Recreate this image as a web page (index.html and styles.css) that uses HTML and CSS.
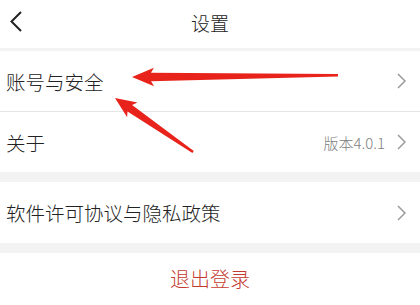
FILE: index.html
```html
<!DOCTYPE html>
<html>
<head>
    <meta charset="UTF-8">
    <meta name="viewport" content="width=device-width, initial-scale=1.0">
    <title>设置</title>
    <link rel="stylesheet" href="styles.css">
</head>
<body>
    <div class="page">
        <div class="header">
            <svg class="back" width="14" height="22" viewBox="0 0 14 22">
                <polyline points="12,1 2.5,10.5 12,20" fill="none" stroke="#222" stroke-width="2"/>
            </svg>
            <div class="title">设置</div>
        </div>

        <div class="group">
            <div class="row">
                <span class="label">账号与安全</span>
                <svg class="chev" width="9" height="16" viewBox="0 0 9 16"><polyline points="1,1 8,8 1,15" fill="none" stroke="#9a9a9a" stroke-width="1.5"/></svg>
            </div>
            <div class="row">
                <span class="label">关于</span>
                <span class="value">版本4.0.1</span>
                <svg class="chev" width="9" height="16" viewBox="0 0 9 16"><polyline points="1,1 8,8 1,15" fill="none" stroke="#9a9a9a" stroke-width="1.5"/></svg>
            </div>
        </div>

        <div class="group">
            <div class="row">
                <span class="label">软件许可协议与隐私政策</span>
                <svg class="chev" width="9" height="16" viewBox="0 0 9 16"><polyline points="1,1 8,8 1,15" fill="none" stroke="#9a9a9a" stroke-width="1.5"/></svg>
            </div>
        </div>

        <div class="logout">退出登录</div>

        <!-- annotation arrows drawn over the screenshot -->
        <svg class="marks" width="420" height="305" viewBox="0 0 420 305">
            <g transform="translate(132,77) rotate(-0.5)" fill="#e8231b">
                <polygon points="0,0 22,-9 19,-4 206,-1.3 206,1.3 19,4.5 22,9.5"/>
            </g>
            <g transform="translate(115,98) rotate(34.7)" fill="#e8231b">
                <polygon points="0,0 21,-9 18,-4 95,-1.2 95,1.2 18,4 21,9"/>
            </g>
        </svg>
    </div>
</body>
</html>
```

FILE: styles.css
```css
* {
    margin: 0;
    padding: 0;
    box-sizing: border-box;
}

body {
    background-color: #f3f3f3;
    font-family: "Noto Sans CJK SC", "Noto Sans", sans-serif;
    font-weight: 300;
    width: 420px;
    height: 305px;
    overflow: hidden;
}

.page {
    position: relative;
    width: 420px;
    height: 305px;
}

.header {
    height: 48px;
    background-color: #ffffff;
    display: flex;
    align-items: center;
    justify-content: center;
    position: relative;
    margin-bottom: 3px;
    padding-bottom: 4px;
}

.back {
    position: absolute;
    left: 9px;
    top: 11px;
}

.title {
    font-size: 19px;
    color: #222222;
}

.group {
    background-color: #ffffff;
    margin-bottom: 10px;
}

.row {
    height: 60px;
    display: flex;
    align-items: center;
    padding: 0 14px 0 6px;
    border-bottom: 1px solid #e6e6e6;
}

.row:last-child {
    border-bottom: none;
}

.group .row:first-child {
    height: 61px;
}

.label {
    flex: 1;
    font-size: 19.5px;
    color: #222222;
}

.value {
    font-size: 15px;
    color: #808080;
    margin-right: 12px;
}

.logout {
    background-color: #ffffff;
    height: 60px;
    display: flex;
    justify-content: center;
    padding-top: 11px;
    font-size: 20px;
    color: #c33b30;
}

.marks {
    position: absolute;
    left: 0;
    top: 0;
}
```
